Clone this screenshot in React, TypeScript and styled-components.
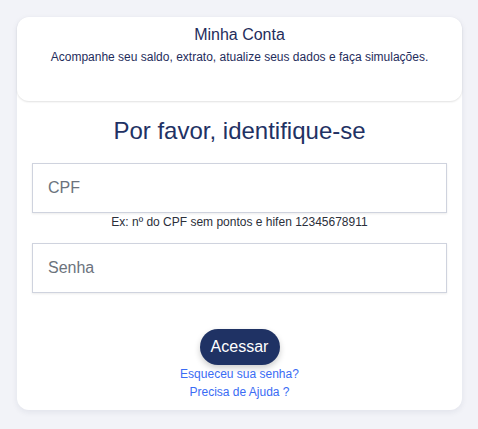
import React from "react";
import styled, { createGlobalStyle } from "styled-components";

const Global = createGlobalStyle`
  html, body { margin: 0; padding: 0; background: #f2f3f8; }
  body { font-family: "Liberation Sans", Arial, sans-serif; }
  * { box-sizing: border-box; }
`;

const Page = styled.div`
  padding: 17px;
  min-height: 429px;
`;

const Card = styled.div`
  width: 445px;
  height: 393px;
  background: #ffffff;
  border-radius: 12px;
  box-shadow: 0 2px 6px rgba(30, 40, 80, 0.08);
  display: flex;
  flex-direction: column;
`;

const Header = styled.div`
  height: 84px;
  border-radius: 12px;
  box-shadow: 0 1px 2px rgba(0, 0, 0, 0.12);
  padding-top: 8px;
  text-align: center;
  color: #1f2d5c;
`;

const HeaderTitle = styled.div`
  font-size: 16px;
  line-height: 20px;
`;

const HeaderSub = styled.div`
  margin-top: 4px;
  font-size: 12px;
  line-height: 16px;
`;

const Body = styled.div`
  padding: 16px 15px 0;
  display: flex;
  flex-direction: column;
  align-items: stretch;
`;

const Title = styled.h1`
  margin: 0;
  font-weight: 400;
  font-size: 24px;
  line-height: 28px;
  text-align: center;
  color: #1f3264;
`;

const Input = styled.input<{ $mt: number }>`
  margin-top: ${(p) => p.$mt}px;
  height: 50px;
  width: 100%;
  border: 1px solid #cfd3de;
  box-shadow: 0 1px 2px rgba(0, 0, 0, 0.08);
  padding: 0 15px;
  font-family: "Liberation Sans", Arial, sans-serif;
  font-size: 16px;
  color: #333;
  outline: none;
  &::placeholder { color: #6c737d; }
`;

const Hint = styled.div`
  margin-top: 1px;
  font-size: 12px;
  line-height: 16px;
  text-align: center;
  color: #2b2f3a;
`;

const Actions = styled.div`
  margin-top: 36px;
  display: flex;
  flex-direction: column;
  align-items: center;
`;

const Button = styled.button`
  height: 36px;
  width: 80px;
  padding: 0;
  border: none;
  border-radius: 18px;
  background: #1f3264;
  color: #ffffff;
  font-family: "Liberation Sans", Arial, sans-serif;
  font-size: 16px;
  box-shadow: 0 3px 6px rgba(0, 0, 0, 0.2);
  cursor: pointer;
`;

const Link = styled.a`
  font-size: 12px;
  line-height: 18px;
  color: #3a6cf4;
  text-decoration: none;
`;

export default function App() {
  return (
    <>
      <Global />
      <Page>
        <Card>
          <Header>
            <HeaderTitle>Minha Conta</HeaderTitle>
            <HeaderSub>Acompanhe seu saldo, extrato, atualize seus dados e faça simulações.</HeaderSub>
          </Header>
          <Body>
            <Title>Por favor, identifique-se</Title>
            <Input $mt={18} placeholder="CPF" />
            <Hint>Ex: nº do CPF sem pontos e hifen 12345678911</Hint>
            <Input $mt={13} type="password" placeholder="Senha" />
            <Actions>
              <Button>Acessar</Button>
              <Link href="#">Esqueceu sua senha?</Link>
              <Link href="#">Precisa de Ajuda ?</Link>
            </Actions>
          </Body>
        </Card>
      </Page>
    </>
  );
}
